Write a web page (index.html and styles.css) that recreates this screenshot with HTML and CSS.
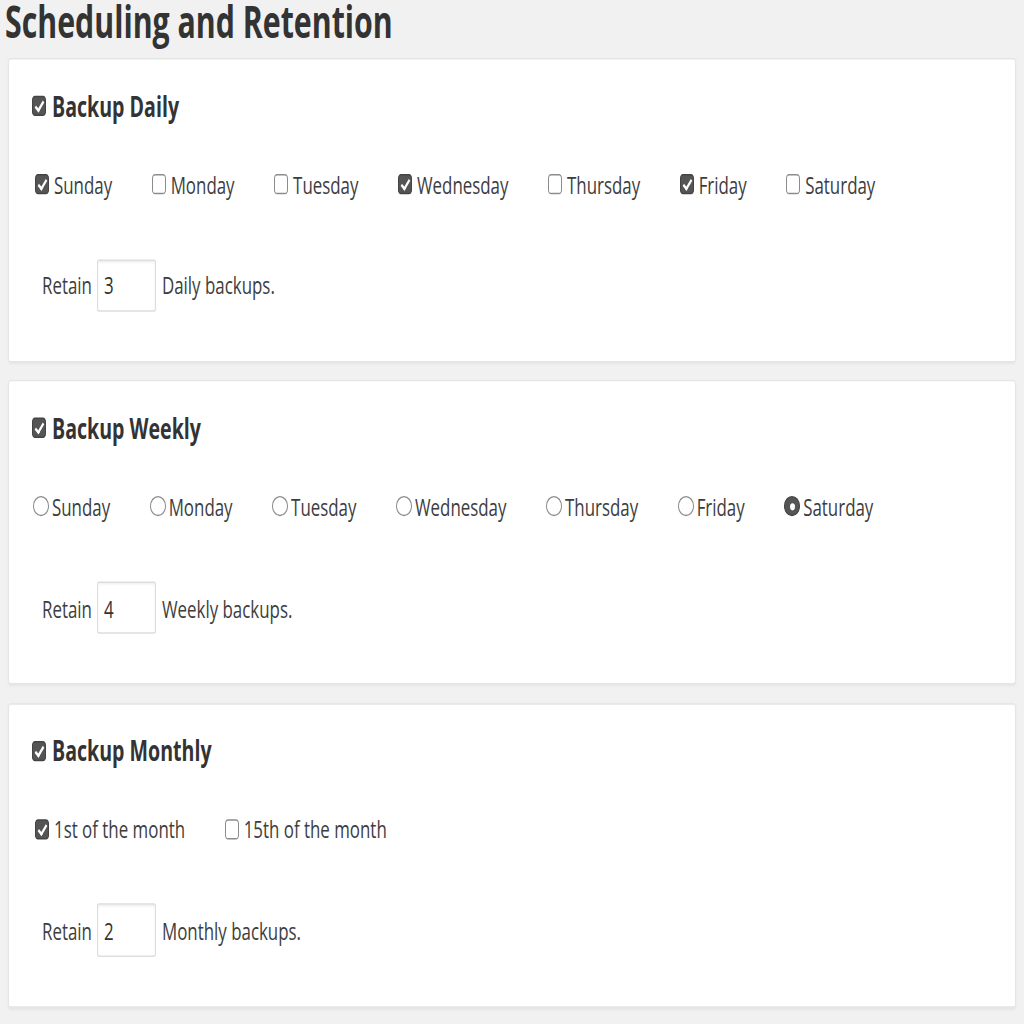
FILE: index.html
```html
<!DOCTYPE html>
<html lang="en">
<head>
    <meta charset="UTF-8">
    <title>Scheduling and Retention</title>
    <link rel="stylesheet" href="styles.css">
</head>
<body>
    <div class="page">
        <h2 class="page-title">Scheduling and Retention</h2>

        <div class="card">
            <label class="card-header">
                <input type="checkbox" checked> Backup Daily
            </label>
            <div class="options">
                <label class="option"><input type="checkbox" checked>Sunday</label>
                <label class="option"><input type="checkbox">Monday</label>
                <label class="option"><input type="checkbox">Tuesday</label>
                <label class="option"><input type="checkbox" checked>Wednesday</label>
                <label class="option"><input type="checkbox">Thursday</label>
                <label class="option"><input type="checkbox" checked>Friday</label>
                <label class="option"><input type="checkbox">Saturday</label>
            </div>
            <div class="retain">
                Retain <input type="text" class="retain-input" value="3"> Daily backups.
            </div>
        </div>

        <div class="card">
            <label class="card-header">
                <input type="checkbox" checked> Backup Weekly
            </label>
            <div class="options options-radio">
                <label class="option"><input type="radio" name="weekday">Sunday</label>
                <label class="option"><input type="radio" name="weekday">Monday</label>
                <label class="option"><input type="radio" name="weekday">Tuesday</label>
                <label class="option"><input type="radio" name="weekday">Wednesday</label>
                <label class="option"><input type="radio" name="weekday">Thursday</label>
                <label class="option"><input type="radio" name="weekday">Friday</label>
                <label class="option"><input type="radio" name="weekday" checked>Saturday</label>
            </div>
            <div class="retain">
                Retain <input type="text" class="retain-input" value="4"> Weekly backups.
            </div>
        </div>

        <div class="card">
            <label class="card-header">
                <input type="checkbox" checked> Backup Monthly
            </label>
            <div class="options">
                <label class="option"><input type="checkbox" checked>1st of the month</label>
                <label class="option"><input type="checkbox">15th of the month</label>
            </div>
            <div class="retain">
                Retain <input type="text" class="retain-input" value="2"> Monthly backups.
            </div>
        </div>
    </div>
</body>
</html>
```

FILE: styles.css
```css
* {
    margin: 0;
    padding: 0;
    box-sizing: border-box;
}

html,
body {
    min-height: 1024px;
}

body {
    background: #f1f1f1;
    color: #3d3d3d;
    font-family: 'Open Sans', 'Liberation Sans', sans-serif;
    font-size: 16.9px;
}

/* the screenshot is stretched vertically, so is the page */
.page {
    transform: scaleY(1.45);
    transform-origin: 0 0;
}

.page-title {
    padding-left: 5px;
    padding-top: 1.5px;
    font-size: 30.3px;
    font-weight: 700;
    line-height: 26px;
    color: #333;
    margin-bottom: 12.5px;
}

.card {
    margin: 0 8px 12.4px;
    height: 210px;
    padding: 20px 23px 0;
    background: #fff;
    border: 1px solid #e5e5e5;
    border-radius: 3px;
    box-shadow: 0 1px 2px rgba(0,0,0,0.05);
}

.card-header {
    display: flex;
    align-items: center;
    height: 24px;
    font-size: 19.6px;
    font-weight: 700;
    color: #333;
}

.card-header input {
    margin-right: 6px;
}

.options {
    display: flex;
    align-items: center;
    height: 22px;
    margin-top: 31px;
    padding-left: 3px;
}

.options-radio {
    padding-left: 1px;
}

.option {
    display: flex;
    align-items: center;
    margin-right: 39.5px;
}

.option input {
    margin-right: 5px;
}

.option input[type="radio"] {
    margin-right: 3px;
}

input[type="checkbox"],
input[type="radio"] {
    appearance: none;
    -webkit-appearance: none;
    position: relative;
    width: 14px;
    height: 14px;
    flex-shrink: 0;
    border: 1px solid #8c8c8c;
    background: #fff;
}

input[type="checkbox"] {
    border-radius: 3px;
}

input[type="checkbox"]:checked {
    background: #555;
    border-color: #444;
}

input[type="checkbox"]:checked::before {
    content: "";
    position: absolute;
    left: 4px;
    top: 1px;
    width: 3px;
    height: 7px;
    border: solid #fff;
    border-width: 0 2px 2px 0;
    transform: rotate(40deg);
}

input[type="radio"] {
    border-radius: 50%;
    width: 16px;
}

input[type="radio"]:checked {
    background: #555;
    border-color: #444;
}

input[type="radio"]:checked::before {
    content: "";
    position: absolute;
    left: 4.5px;
    top: 3.5px;
    width: 5px;
    height: 5px;
    border-radius: 50%;
    background: #fff;
}

.retain {
    display: flex;
    align-items: center;
    margin-top: 40.5px;
    padding-left: 10px;
}

.retain-input {
    width: 59px;
    height: 36.5px;
    margin: 0 6px 0 5px;
    padding: 0 6px;
    font-family: inherit;
    font-size: 16.9px;
    color: #333;
    border: 1px solid #ddd;
    border-radius: 2px;
    box-shadow: inset 0 1px 2px rgba(0,0,0,0.07);
    background: #fff;
}
```
